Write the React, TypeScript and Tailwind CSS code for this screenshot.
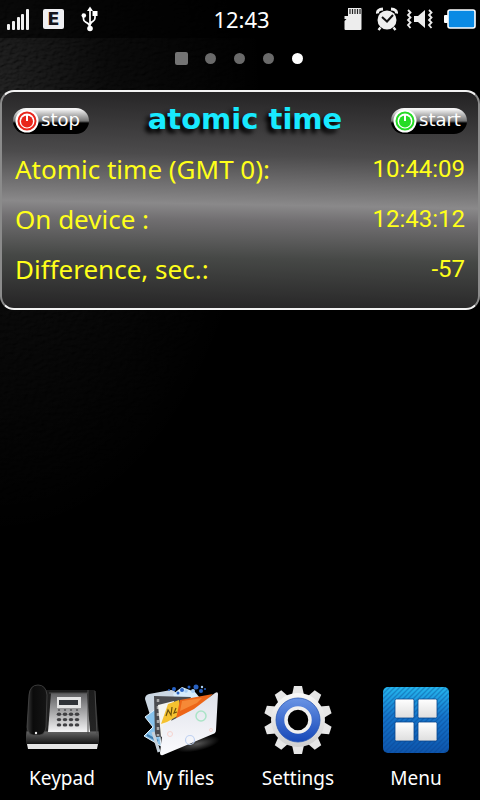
import type { ReactNode } from "react";

function SignalIcon() {
  return (
    <svg width="24" height="24" viewBox="0 0 24 24" fill="#f1f1f1" aria-hidden="true">
      <rect x="0" y="17" width="3" height="6" rx="1" />
      <rect x="5" y="14" width="3" height="9" rx="1" />
      <rect x="10" y="10" width="3" height="13" rx="1" />
      <rect x="14" y="7" width="3" height="16" rx="1" />
      <rect x="19" y="2" width="3" height="21" rx="1" />
    </svg>
  );
}

function UsbIcon() {
  return (
    <svg width="18" height="26" viewBox="0 0 18 26" aria-hidden="true">
      <path d="M9 5V22M2.500 10v3q0 2 2 3l2.500 1.500 2 3M14 8v4q0 2-2 3.200l-1.500 1-1.500 2.500" fill="none" stroke="#fff" strokeWidth="1.700" />
      <path d="M9 0.500 12 5H6z" fill="#fff" />
      <circle cx="2.800" cy="9.500" r="2.300" fill="#fff" />
      <rect x="11.500" y="5" width="5" height="5" fill="#fff" />
      <circle cx="9" cy="22.500" r="2.800" fill="#fff" />
    </svg>
  );
}

function SdIcon() {
  return (
    <svg width="18" height="24" viewBox="0 0 18 24" aria-hidden="true">
      <path d="M4 1h12.500q1 0 1 1v20q0 1-1 1H1.500q-1 0-1-1v-8l2-2h-2V9H4z" fill="#ededed" />
      <path d="M6 2v5M8.500 2v5M11 2v5M13.500 2v5M16 2v5" stroke="#222" strokeWidth="1.200" />
    </svg>
  );
}

function AlarmIcon() {
  return (
    <svg width="22" height="24" viewBox="0 0 22 24" aria-hidden="true">
      <circle cx="11" cy="13" r="9.500" fill="#f0f0f0" />
      <path d="M1.500 6.500Q1 2.500 7 2M20.500 6.500Q21 2.500 15 2" stroke="#f0f0f0" strokeWidth="3" fill="none" />
      <path d="M4.500 20.500 2.500 23M17.500 20.500l2 2.500" stroke="#f0f0f0" strokeWidth="2.400" />
      <path d="m6 10 5 4.500L17 8" stroke="#111" strokeWidth="2" fill="none" />
    </svg>
  );
}

function VibrateIcon() {
  return (
    <svg width="28" height="22" viewBox="0 0 28 22" aria-hidden="true">
      <path d="M8 8h4l7-6v18l-7-6H8z" fill="#ececec" />
      <path d="m2 2 2.500 2.500L2 7l2.500 2.500L2 12l2.500 2.500L2 17l2.500 3M23 2l2.500 2.500L23 7l2.500 2.500L23 12l2.500 2.500L23 17l2.500 3" stroke="#ececec" strokeWidth="1.800" fill="none" />
    </svg>
  );
}

function BatteryIcon() {
  return (
    <svg width="32" height="20" viewBox="0 0 32 20" aria-hidden="true">
      <rect x="0" y="6" width="4" height="8" rx="1" fill="#fff" />
      <rect x="4" y="1" width="27" height="18" rx="2" fill="#0a8ae4" stroke="#fff" strokeWidth="1.600" />
    </svg>
  );
}

function StatusBar() {
  return (
    <header className="grid h-[38px] grid-cols-[1fr_auto_1fr] items-center bg-black/60 pr-1 pl-[7px]">
      <div className="flex items-center">
        <SignalIcon />
        <span className="mr-[17px] ml-3 flex h-5 w-[21px] items-center justify-center rounded-xs bg-[#efeff2] font-['DejaVu_Sans'] text-lg leading-5 font-bold text-[#15151c]">
          E
        </span>
        <UsbIcon />
      </div>
      <time className="font-['Noto_Sans',sans-serif] text-[22px] leading-8">12:43</time>
      <div className="flex items-center justify-end">
        <SdIcon />
        <span className="ml-3.5 flex"><AlarmIcon /></span>
        <span className="ml-2 flex"><VibrateIcon /></span>
        <span className="ml-2.5 flex"><BatteryIcon /></span>
      </div>
    </header>
  );
}

function PageDots() {
  return (
    <nav aria-label="Home pages" className="flex h-10 items-center justify-center pr-0.5">
      {[0, 1, 2, 3, 4].map((page) => (
        <button key={page} type="button" aria-label={`Page ${page + 1}`} className="flex w-[29px] justify-center">
          <span
            className={
              page === 0
                ? "size-[13px] rounded-xs bg-[#747474]"
                : page === 4
                  ? "size-[11px] rounded-full bg-white"
                  : "size-[11px] rounded-full bg-[#6a6a6a]"
            }
          />
        </button>
      ))}
    </nav>
  );
}

function PowerButton({ label, color }: { label: string; color: string }) {
  return (
    <button
      type="button"
      className="flex h-[26px] w-[76px] items-center gap-0.5 rounded-full bg-linear-to-b from-[#f4f4f4] from-5% via-[#777] via-50% to-black to-60% pl-0.5 font-['DejaVu_Sans',sans-serif] text-lg leading-5 text-white"
    >
      <svg width="24" height="24" viewBox="0 0 24 24" className="shrink-0" aria-hidden="true">
        <circle cx="12" cy="12" r="11.500" fill="#fff" />
        <circle cx="12" cy="12" r="8.500" fill="none" stroke={color} strokeWidth="2" />
        <circle cx="12" cy="12.500" r="6" fill={color} />
        <path d="M12 5v7" stroke="#fff" strokeWidth="2" />
      </svg>
      <span className="pb-0.5">{label}</span>
    </button>
  );
}

function TimeRow({ label, value }: { label: string; value: string }) {
  return (
    <div className="flex h-[50px] items-center justify-between pb-1">
      <dt className="font-['Noto_Sans',sans-serif] text-[26px] leading-8">{label}</dt>
      <dd className="font-[Roboto,sans-serif] text-2xl leading-8">{value}</dd>
    </div>
  );
}

function AtomicTimeWidget() {
  return (
    <section className="mt-3 rounded-[14px] border-2 border-x-[#8b8b8b] border-y-[#f2f2f2] bg-[linear-gradient(181deg,#232223_0%,#4c4b4c_30%,#7b7a7b_47%,#8a898a_52%,#716f71_59%,#464846_76%,#252425_100%)] pb-3">
      <div className="flex h-[54px] items-center justify-between px-[11px] pt-1">
        <PowerButton label="stop" color="#e8261c" />
        <h1 className="flex-1 pb-1 pl-2.5 text-center font-['DejaVu_Sans',sans-serif] text-[29px] leading-8 font-bold text-[#18eaff] [text-shadow:-4px_4px_4px_#000]">
          atomic time
        </h1>
        <PowerButton label="start" color="#25dc25" />
      </div>
      <dl className="px-[13px] text-[#ffff1a]">
        <TimeRow label="Atomic time (GMT 0):" value="10:44:09" />
        <TimeRow label="On device :" value="12:43:12" />
        <TimeRow label="Difference, sec.:" value="-57" />
      </dl>
    </section>
  );
}

function PhoneIcon() {
  const keys = [0, 1, 2, 3].flatMap((row) => [0, 1, 2, 3].map((col) => ({ row, col })));
  return (
    <svg width="76" height="72" viewBox="0 0 76 72" aria-hidden="true">
      <defs>
        <linearGradient id="phoneFace" x2="0" y2="1">
          <stop stopColor="#5d5d5f" />
          <stop offset="1" stopColor="#f4f4f5" />
        </linearGradient>
        <linearGradient id="phoneBody" x2="0" y2="1">
          <stop stopColor="#1c1c1c" />
          <stop offset=".75" stopColor="#242424" />
          <stop offset=".78" stopColor="#606060" />
          <stop offset="1" stopColor="#151515" />
        </linearGradient>
        <linearGradient id="handset">
          <stop stopColor="#3b3b3b" />
          <stop offset=".3" stopColor="#0b0b0b" />
          <stop offset="1" stopColor="#151515" />
        </linearGradient>
      </defs>
      <path d="M6 6h65l4 46v8H2v-8z" fill="url(#phoneBody)" />
      <path d="M3 60h71l-1 5H4z" fill="#e5e5e5" />
      <path d="M27 9h36l3 39H24z" fill="url(#phoneFace)" />
      <path d="M25 9h39M64 6v44M71 7l2 43" stroke="#4a4a4a" strokeWidth="1" fill="none" />
      <rect x="33" y="13" width="24" height="11" fill="#e4e4e4" />
      <rect x="35" y="16" width="19" height="5" fill="#303338" />
      {keys.map(({ row, col }) => (
        <ellipse
          key={`${row}-${col}`}
          cx={35 + col * 6}
          cy={row === 0 ? 26 : 25 + row * 5.300}
          rx={row === 0 ? 1.200 : 2.300}
          ry={row === 0 ? 0.8 : 1.700}
          fill="#3f3f42"
        />
      ))}
      <path d="M5 11Q6 1 14 1t9 10l-1 32q-1 7-6 8H9q-5-1-6-8z" fill="url(#handset)" stroke="#484848" strokeWidth=".8" />
      <circle cx="12" cy="49" r="1.200" fill="#eee" />
    </svg>
  );
}

function FilesIcon() {
  return (
    <svg width="80" height="72" viewBox="0 0 80 72" aria-hidden="true">
      <defs>
        <linearGradient id="folderFront" x2="0" y2="1">
          <stop stopColor="#dfe2ea" />
          <stop offset="1" stopColor="#fbfbfe" />
        </linearGradient>
        <radialGradient id="folderShade">
          <stop stopColor="#555" />
          <stop offset="1" stopColor="#000" />
        </radialGradient>
      </defs>
      <ellipse cx="57" cy="60" rx="23" ry="7" fill="url(#folderShade)" transform="rotate(-12 57 60)" />
      <path d="M5 15q0-4 4-5l22-4q4 0 5 4l6 24-28 10z" fill="#ccd7e2" />
      <path d="m5 33 12-9 4 38L4 52l9-9z" fill="#86c2ec" stroke="#e5f1fa" strokeWidth="1" />
      <path d="m7 51 11 6" stroke="#3e7cae" strokeWidth="2" />
      <path d="m33 10 9-7 13 5 5 6-24 4z" fill="#d6ebfa" />
      <g fill="#2862c4">
        <circle cx="34" cy="5" r="2" /><circle cx="42" cy="6" r="2" /><circle cx="49" cy="3" r="1.500" />
        <circle cx="56" cy="3" r="2.500" /><circle cx="61" cy="7" r="2" /><circle cx="38" cy="9" r="1.500" />
        <circle cx="65" cy="5" r="1" /><circle cx="29" cy="6" r="1" />
      </g>
      <g fill="#a9cef2">
        <circle cx="46" cy="7" r="1.800" /><circle cx="53" cy="7" r="2" /><circle cx="62" cy="3" r="1.200" />
      </g>
      <path d="m14 12 37 1-20 39-16 1z" fill="#4b4c50" />
      <path d="M18 15v37" stroke="#aaa" strokeWidth="2.500" strokeDasharray="3 4" />
      <path d="m18 21 16-4-4 30-9 6z" fill="#f4f4ef" />
      <path d="m21 40 7-20 11-4 2 14-14 8z" fill="#f5c230" />
      <path d="m26 32 2-6 3 5 1-8m4 1-2 5 3-1" stroke="#6c520b" strokeWidth="1.200" fill="none" />
      <path d="m40 16 33-6-15 14-22 11z" fill="#ed6517" />
      <path d="m42 17 20-3-5 5-17 8z" fill="#ffad58" opacity=".5" />
      <path d="M23 43q0-2 2-3l29-15L75 9q3-2 3 1l-2 36q0 3-3 4L23 71q-3 1-3-2z" fill="url(#folderFront)" />
      <path d="m13 48 6 20" stroke="#c6d1db" strokeWidth="3" />
      <circle cx="61" cy="32" r="5" fill="none" stroke="#abe4c7" strokeWidth="1.500" />
      <circle cx="50" cy="56" r="4.500" fill="none" stroke="#bfd2f2" strokeWidth="1.200" />
      <circle cx="30" cy="50" r="2.500" fill="none" stroke="#f6d4cf" />
      <circle cx="71" cy="46" r="1.500" fill="none" stroke="#f6d4cf" />
    </svg>
  );
}

function GearIcon() {
  const teeth = [0, 36, 72, 108, 144, 180, 216, 252, 288, 324];
  return (
    <svg width="70" height="72" viewBox="0 0 70 72" aria-hidden="true">
      <defs>
        <linearGradient id="gearMetal" x2="0" y2="72" gradientUnits="userSpaceOnUse">
          <stop stopColor="#fff" />
          <stop offset="1" stopColor="#c9c9c9" />
        </linearGradient>
        <linearGradient id="gearBlue" x2="0" y2="1">
          <stop stopColor="#6994e5" />
          <stop offset="1" stopColor="#1648b8" />
        </linearGradient>
      </defs>
      {teeth.map((angle) => (
        <path key={angle} d="M29 11 31 2h8l2 9z" fill="#e6e6e6" transform={`rotate(${angle} 35 36)`} />
      ))}
      <circle cx="35" cy="36" r="27" fill="url(#gearMetal)" />
      <circle cx="35" cy="36" r="22" fill="url(#gearBlue)" stroke="#2858b5" strokeWidth=".8" />
      <circle cx="35" cy="36" r="12" fill="#000" stroke="#f0f0f0" strokeWidth="3.500" />
    </svg>
  );
}

function MenuIcon() {
  return (
    <svg width="66" height="72" viewBox="0 0 66 72" aria-hidden="true">
      <defs>
        <linearGradient id="menuBlue" x2="0" y2="1">
          <stop stopColor="#24b7ee" />
          <stop offset=".45" stopColor="#1475cb" />
          <stop offset="1" stopColor="#0d55ac" />
        </linearGradient>
        <pattern id="menuStripes" width="5" height="5" patternUnits="userSpaceOnUse">
          <path d="M-1 1l2-2M0 5l5-5M4 6l2-2" stroke="#073b86" strokeWidth="1.400" opacity=".35" />
        </pattern>
        <linearGradient id="menuTile" x2="0" y2="1">
          <stop stopColor="#fff" />
          <stop offset="1" stopColor="#dedede" />
        </linearGradient>
      </defs>
      <rect y="3" width="66" height="66" rx="5" fill="url(#menuBlue)" />
      <rect y="3" width="66" height="66" rx="5" fill="url(#menuStripes)" />
      <g fill="url(#menuTile)" stroke="#09458c" strokeWidth=".8">
        <rect x="12" y="15" width="19" height="19" rx="1.500" />
        <rect x="35" y="15" width="19" height="19" rx="1.500" />
        <rect x="12" y="38" width="19" height="19" rx="1.500" />
        <rect x="35" y="38" width="19" height="19" rx="1.500" />
      </g>
    </svg>
  );
}

function DockItem({ label, children }: { label: string; children: ReactNode }) {
  return (
    <button type="button" className="flex flex-col items-center gap-2">
      {children}
      <span className="font-['Noto_Sans',sans-serif] text-[19px] leading-7">{label}</span>
    </button>
  );
}

export default function App() {
  return (
    <main className="relative isolate flex min-h-screen flex-col overflow-hidden bg-black text-white">
      <svg className="absolute inset-0 -z-10 size-full" aria-hidden="true">
        <defs>
          <filter id="leather" x="0" y="0" width="100%" height="100%">
            <feTurbulence type="fractalNoise" baseFrequency="0.16 0.28" numOctaves="3" seed="7" />
            <feDiffuseLighting lightingColor="#fff" surfaceScale="2">
              <feDistantLight azimuth="225" elevation="45" />
            </feDiffuseLighting>
          </filter>
          <radialGradient id="glow" cx="0" cy=".12" r=".55">
            <stop stopColor="#fff" stopOpacity=".15" />
            <stop offset=".4" stopColor="#fff" stopOpacity=".05" />
            <stop offset="1" stopColor="#fff" stopOpacity="0" />
          </radialGradient>
          <mask id="glowMask">
            <rect width="100%" height="100%" fill="url(#glow)" />
          </mask>
        </defs>
        <g mask="url(#glowMask)">
          <rect width="100%" height="100%" filter="url(#leather)" />
        </g>
      </svg>
      <StatusBar />
      <PageDots />
      <AtomicTimeWidget />
      <nav aria-label="Dock" className="mt-auto grid grid-cols-4 pt-8 pr-[5px] pb-2 pl-[3px]">
        <DockItem label="Keypad"><PhoneIcon /></DockItem>
        <DockItem label="My files"><FilesIcon /></DockItem>
        <DockItem label="Settings"><GearIcon /></DockItem>
        <DockItem label="Menu"><MenuIcon /></DockItem>
      </nav>
    </main>
  );
}
